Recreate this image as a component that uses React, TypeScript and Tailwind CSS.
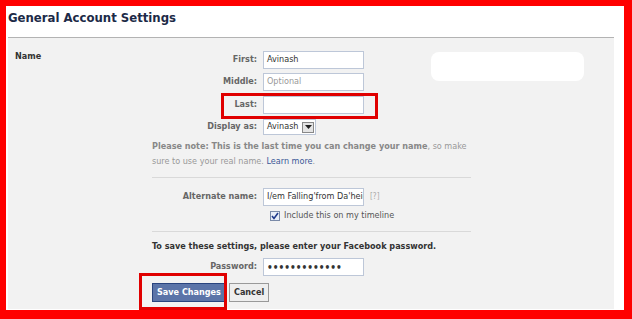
import React from 'react';

const FONT = { fontFamily: '"DejaVu Sans Condensed", "DejaVu Sans", Tahoma, sans-serif' };

const Row: React.FC<{ label: string; children: React.ReactNode; className?: string }> = ({ label, children, className }) => (
  <div className={`flex items-center ${className ?? ''}`}>
    <div className="w-[111px] text-right text-[9px] font-bold text-[#666] pr-[6px]">{label}</div>
    {children}
  </div>
);

const TextBox: React.FC<{ value?: string; placeholder?: string; password?: boolean }> = ({ value, placeholder, password }) => (
  <div className="w-[101px] h-[18px] bg-white border border-[#bdc7d8] flex items-center px-[3px] text-[9px] text-[#333] overflow-hidden whitespace-nowrap">
    {value ? (
      <span className={password ? 'text-[10px] font-bold' : ''}>{value}</span>
    ) : (
      <span className="text-[#999]">{placeholder}</span>
    )}
  </div>
);

export default function App() {
  return (
    <div className="w-[632px] h-[319px] bg-white border-[#ff0000] border-l-[6px] border-t-[6px] border-r-[8px] border-b-[9px] relative" style={FONT}>
      <div className="pl-[2px] pr-[10px]">
        <div className="h-[32px] flex items-start pt-[2px] text-[13px] font-bold text-[#1c2a47] border-b border-[#b3b3b3]">
          General Account Settings
        </div>
        <div className="h-[271px] bg-[#f2f2f2] flex relative">
          <div className="w-[144px] pl-[7px] pt-[12px] text-[9px] font-bold text-[#333]">Name</div>
          <div className="flex flex-col pt-[13px] w-[319px]">
            <Row label="First:">
              <TextBox value="Avinash" />
            </Row>
            <Row label="Middle:" className="mt-[4px]">
              <TextBox placeholder="Optional" />
            </Row>
            <Row label="Last:" className="mt-[5px]">
              <TextBox />
            </Row>
            <Row label="Display as:" className="mt-[5px]">
              <div className="h-[16px] w-[53px] bg-white border border-[#bdc7d8] flex items-center justify-between pl-[3px] pr-[1px] text-[9px] text-[#333]">
                <span>Avinash</span>
                <span className="w-[12px] h-[11px] bg-[#e4e4e4] border border-[#888] flex items-center justify-center">
                  <svg width="7" height="4" viewBox="0 0 7 4"><path d="M0 0h7L3.5 4z" fill="#222" /></svg>
                </span>
              </div>
            </Row>
            <div className="mt-[4px] text-[9px] leading-[15px] text-[#999]">
              <span className="font-bold text-[#888]">Please note: This is the last time you can change your name</span>, so make
              <br />
              sure to use your real name. <span className="text-[#3b5998]">Learn more</span>.
            </div>
            <div className="mt-[8px] h-px bg-[#d9d9d9]" />
            <Row label="Alternate name:" className="mt-[10px]">
              <TextBox value="I/em Falling'from Da'heig" />
              <span className="ml-[6px] text-[8px] text-[#aaa]">[?]</span>
            </Row>
            <div className="flex items-center mt-[3px] pl-[118px] text-[9px] text-[#555]">
              <span className="w-[10px] h-[10px] border border-[#7a8aa8] bg-[#e8eef8] flex items-center justify-center mr-[4px]">
                <svg width="8" height="8" viewBox="0 0 8 8"><path d="M1 4l2 2.5L7 1" stroke="#1f3a8a" strokeWidth="1.6" fill="none" /></svg>
              </span>
              Include this on my timeline
            </div>
            <div className="mt-[8px] h-px bg-[#d9d9d9]" />
            <div className="mt-[8px] text-[9px] font-bold text-[#333]">To save these settings, please enter your Facebook password.</div>
            <Row label="Password:" className="mt-[5px]">
              <TextBox value="•••••••••••••" password />
            </Row>
            <div className="flex mt-[7px] gap-[3px]">
              <div className="h-[19px] px-[4px] bg-[#5b74a8] border border-[#29447e] text-white text-[9px] font-bold flex items-center">Save Changes</div>
              <div className="h-[19px] px-[4px] bg-[#eeeeee] border border-[#999] text-[#333] text-[9px] font-bold flex items-center">Cancel</div>
            </div>
          </div>
          <div className="ml-[-40px] mt-[14px] w-[153px] h-[29px] bg-white rounded-[8px]" />
        </div>
      </div>
      {/* red annotation boxes */}
      <div className="absolute left-[215px] top-[87px] w-[157px] h-[26px] border-[3px] border-[#e00000]" />
      <div className="absolute left-[133px] top-[267px] w-[88px] h-[37px] border-[3px] border-[#e00000]" />
    </div>
  );
}
